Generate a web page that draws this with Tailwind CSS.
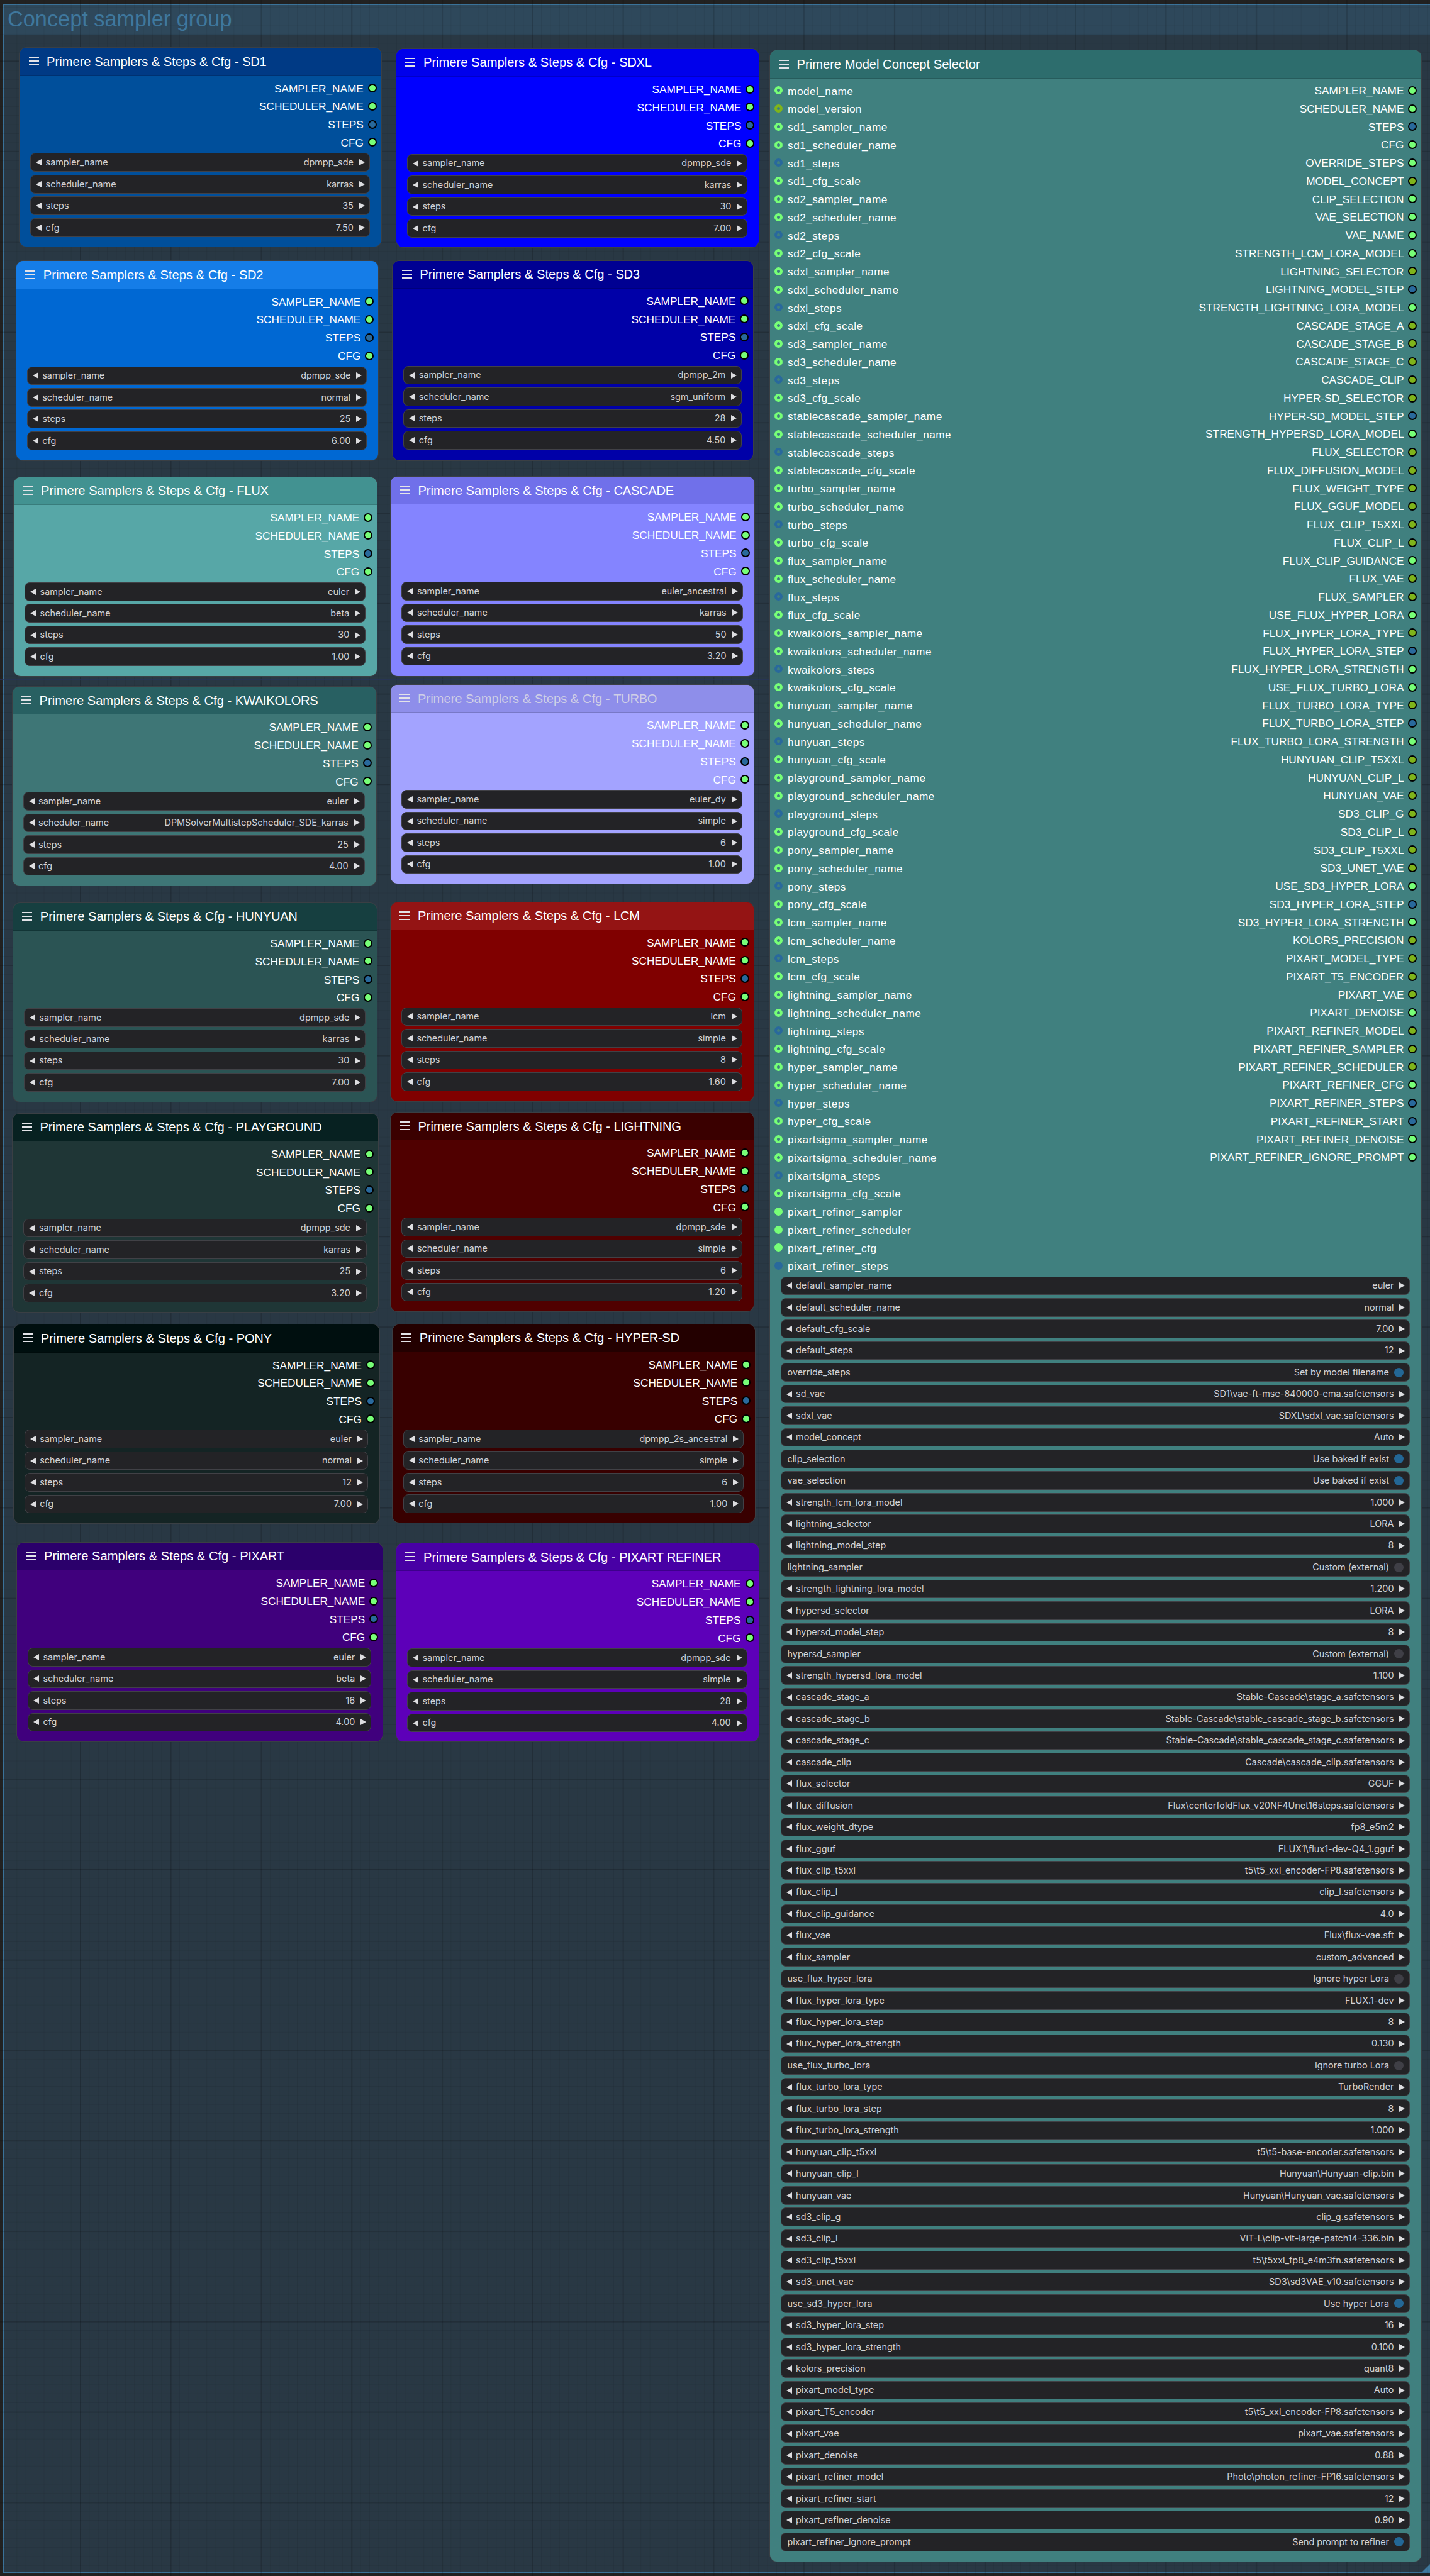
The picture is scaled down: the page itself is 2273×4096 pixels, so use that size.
<!DOCTYPE html>
<html lang="en">
<head>
<meta charset="utf-8">
<title>Concept sampler group</title>
<script src="https://cdn.jsdelivr.net/npm/@tailwindcss/browser@4"></script>
</head>
<body class="bg-[#212121]">
<main class="relative w-[2273px] h-[4096px] overflow-hidden bg-[#212121] font-['Liberation_Sans',Arial,sans-serif]">
  <section class="absolute left-[5px] top-[6px] w-[2272px] h-[4085px] bg-[#293844] border-2 border-[#3a7299]">
    <header class="h-[48px] bg-[#2e485b] pl-[5px] flex items-start text-[34.3px] leading-[44px] text-[#3f789e]">Concept sampler group</header>
    <svg class="absolute right-0 bottom-0" width="14" height="14" viewBox="0 0 14 14"><path d="M14 0V14H0Z" fill="#3f789e"/></svg>
  </section>
  <div class="absolute inset-0 bg-[linear-gradient(to_right,#00000012_1px,transparent_1px),linear-gradient(to_bottom,#00000012_1px,transparent_1px)] bg-[length:14.38px_14.38px] bg-[position:127px_97px]"></div>
  <div class="absolute inset-0 bg-[linear-gradient(to_right,#00000022_2px,transparent_2px),linear-gradient(to_bottom,#00000022_2px,transparent_2px)] bg-[length:143.8px_143.8px] bg-[position:127px_96px]"></div>
  <div class="absolute left-0 top-[1080px] w-[1222px] h-[2px] bg-[#26345a]/70"></div>
  <div id="canvas"></div>
</main>
<script>
const K = 2273 / 2780;
const DOT = { g: 'bg-[#77ff77]', b: 'bg-[#29699c]', o: 'bg-[#7fb41b]' };
const RING = { g: 'border-[#77ff77]', b: 'border-[#29699c]', o: 'border-[#7fb41b]' };

const box = 'flex items-center h-[29.6px] rounded-[8px] bg-[#232326] border-[1.5px] border-[#414146] text-[#d2d2d6]';
const arrowL = '<svg class="w-[9px] h-[10px] shrink-0" viewBox="0 0 9 10"><path d="M9 0V10L0 5Z" fill="#dddde0"/></svg>';
const arrowR = '<svg class="w-[9px] h-[10px] shrink-0" viewBox="0 0 9 10"><path d="M0 0V10L9 5Z" fill="#dddde0"/></svg>';

const widget = ([name, value, toggle]) => toggle
  ? `<div class="${box} pl-[10px] pr-[9.5px]"><span class="grow">${name}</span><span>${value}</span><i class="ml-[8px] size-[15px] rounded-full ${toggle === 'on' ? 'bg-[#236796]' : 'bg-[#3f3f46]'}"></i></div>`
  : `<div class="${box} pl-[8px] pr-[7px]">${arrowL}<span class="grow pl-[6.5px]">${name}</span><span class="pr-[9px]">${value}</span>${arrowR}</div>`;

const output = ([name, c]) =>
  `<div class="h-[28.76px] flex items-center justify-end"><span class="pt-[2px]">${name}</span><i class="ml-[7px] size-[14px] rounded-full border-2 border-black ${DOT[c]}"></i></div>`;
const input = ([name, c, open]) =>
  `<div class="h-[28.76px] flex items-center"><i class="mr-[8px] size-[13px] rounded-full ${open ? DOT[c] : 'border-4 ' + RING[c]}"></i><span class="pt-[3px] tracking-[0.45px]">${name}</span></div>`;

function node({ x, y, r, b, title, name = '', head, body, ink = 'text-white', inputs = [], outputs, widgets, gap = 'gap-[4.9px]', top = 'pt-[5.2px]' }) {
  return `<article class="absolute rounded-[11px] overflow-hidden shadow-[0_0_0_1px_#3a3f44] ${body}" style="left:${x * K}px;top:${y * K}px;width:${(r - x) * K}px;height:${(b - y) * K}px">
    <header class="h-[44.4px] pl-[14.5px] flex items-center border-b-[1.5px] border-black/15 ${head} ${ink}">
      <svg class="w-[16px] h-[14px] mr-[12.5px] -mt-px" viewBox="0 0 16 14"><path d="M0 1H16M0 7H16M0 13H16" stroke="#e3e3e8" stroke-width="1.9"/></svg>
      <h2 class="text-[20.15px] leading-none whitespace-pre">${title}<span class="tracking-[-0.3px]">${name}</span></h2>
    </header>
    <div class="flex justify-between ${top} pl-[7.5px] pr-[7px] text-[17.25px] leading-none text-white whitespace-nowrap">
      <div>${inputs.map(input).join('')}</div>
      <div>${outputs.map(output).join('')}</div>
    </div>
    <div class="flex flex-col ${gap} mt-[2.6px] ml-[17px] mr-[18px] font-[Inter,sans-serif] text-[14.4px] leading-none whitespace-nowrap">${widgets.map(widget).join('')}</div>
  </article>`;
}

const samplers = [
  [38, 93.3, 741, 480, 'SD1', 'bg-[#003a85]', 'bg-[#004f9b]', 'dpmpp_sde', 'karras', '35', '7.50'],
  [770.5, 95, 1475.5, 481, 'SDXL', 'bg-[#0000eb]', 'bg-[#0000ff]', 'dpmpp_sde', 'karras', '30', '7.00'],
  [31.5, 508, 735.5, 895.5, 'SD2', 'bg-[#157de8]', 'bg-[#0068d3]', 'dpmpp_sde', 'normal', '25', '6.00'],
  [763.5, 507, 1464.5, 895, 'SD3', 'bg-[#000092]', 'bg-[#0000a8]', 'dpmpp_2m', 'sgm_uniform', '28', '4.50'],
  [27, 928, 733, 1314.5, 'FLUX', 'bg-[#429291]', 'bg-[#57a7a7]', 'euler', 'beta', '30', '1.00'],
  [760, 927, 1466, 1314.5, 'CASCADE', 'bg-[#7070ea]', 'bg-[#8484ff]', 'euler_ancestral', 'karras', '50', '3.20'],
  [24, 1335.5, 731, 1722.5, 'KWAIKOLORS', 'bg-[#286062]', 'bg-[#3e7676]', 'euler', 'DPMSolverMultistepScheduler_SDE_karras', '25', '4.00'],
  [759.5, 1332, 1465, 1718.5, 'TURBO', 'bg-[#8e8eea]', 'bg-[#a3a3ff]', 'euler_dy', 'simple', '6', '1.00', 'text-[#cfcfe6]'],
  [25.5, 1756, 733, 2142.5, 'HUNYUAN', 'bg-[#163f40]', 'bg-[#2b5454]', 'dpmpp_sde', 'karras', '30', '7.00'],
  [759.5, 1754.5, 1465, 2141, 'LCM', 'bg-[#941414]', 'bg-[#800000]', 'lcm', 'simple', '8', '1.60'],
  [25, 2165.5, 735, 2551.5, 'PLAYGROUND', 'bg-[#072121]', 'bg-[#1f3636]', 'dpmpp_sde', 'karras', '25', '3.20'],
  [760, 2163.5, 1465, 2550, 'LIGHTNING', 'bg-[#3a0000]', 'bg-[#500000]', 'dpmpp_sde', 'simple', '6', '1.20'],
  [26.5, 2576, 737.5, 2962, 'PONY', 'bg-[#000f0f]', 'bg-[#142424]', 'euler', 'normal', '12', '7.00'],
  [763, 2575.5, 1468, 2961.5, 'HYPER-SD', 'bg-[#230000]', 'bg-[#380000]', 'dpmpp_2s_ancestral', 'simple', '6', '1.00'],
  [33, 3000, 744, 3386.5, 'PIXART', 'bg-[#2b006b]', 'bg-[#40007d]', 'euler', 'beta', '16', '4.00'],
  [770.5, 3001.5, 1474.5, 3387, 'PIXART REFINER', 'bg-[#4800a5]', 'bg-[#5d00b9]', 'dpmpp_sde', 'simple', '28', '4.00'],
].map(([x, y, r, b, name, head, body, s, sc, st, cfg, ink]) => ({
  x, y, r, b, head, body, ink, name, title: 'Primere Samplers &amp; Steps &amp; Cfg - ',
  outputs: [['SAMPLER_NAME', 'g'], ['SCHEDULER_NAME', 'g'], ['STEPS', 'b'], ['CFG', 'g']],
  widgets: [['sampler_name', s], ['scheduler_name', sc], ['steps', st], ['cfg', cfg]],
}));

const inputs = [['model_name', 'g'], ['model_version', 'o']];
for (const m of 'sd1 sd2 sdxl sd3 stablecascade turbo flux kwaikolors hunyuan playground pony lcm lightning hyper pixartsigma'.split(' '))
  inputs.push([m + '_sampler_name', 'g'], [m + '_scheduler_name', 'g'], [m + '_steps', 'b'], [m + '_cfg_scale', 'g']);
inputs.push(['pixart_refiner_sampler', 'g', 1], ['pixart_refiner_scheduler', 'g', 1], ['pixart_refiner_cfg', 'g', 1], ['pixart_refiner_steps', 'b', 1]);

const outputs = `SAMPLER_NAME g|SCHEDULER_NAME g|STEPS b|CFG g|OVERRIDE_STEPS g|MODEL_CONCEPT o|CLIP_SELECTION g|VAE_SELECTION g|VAE_NAME g|STRENGTH_LCM_LORA_MODEL g|LIGHTNING_SELECTOR o|LIGHTNING_MODEL_STEP b|STRENGTH_LIGHTNING_LORA_MODEL g|CASCADE_STAGE_A o|CASCADE_STAGE_B o|CASCADE_STAGE_C o|CASCADE_CLIP o|HYPER-SD_SELECTOR o|HYPER-SD_MODEL_STEP b|STRENGTH_HYPERSD_LORA_MODEL g|FLUX_SELECTOR o|FLUX_DIFFUSION_MODEL o|FLUX_WEIGHT_TYPE o|FLUX_GGUF_MODEL o|FLUX_CLIP_T5XXL o|FLUX_CLIP_L o|FLUX_CLIP_GUIDANCE g|FLUX_VAE o|FLUX_SAMPLER o|USE_FLUX_HYPER_LORA g|FLUX_HYPER_LORA_TYPE o|FLUX_HYPER_LORA_STEP b|FLUX_HYPER_LORA_STRENGTH g|USE_FLUX_TURBO_LORA g|FLUX_TURBO_LORA_TYPE o|FLUX_TURBO_LORA_STEP b|FLUX_TURBO_LORA_STRENGTH g|HUNYUAN_CLIP_T5XXL o|HUNYUAN_CLIP_L o|HUNYUAN_VAE o|SD3_CLIP_G o|SD3_CLIP_L o|SD3_CLIP_T5XXL o|SD3_UNET_VAE o|USE_SD3_HYPER_LORA g|SD3_HYPER_LORA_STEP b|SD3_HYPER_LORA_STRENGTH g|KOLORS_PRECISION o|PIXART_MODEL_TYPE o|PIXART_T5_ENCODER o|PIXART_VAE o|PIXART_DENOISE g|PIXART_REFINER_MODEL o|PIXART_REFINER_SAMPLER o|PIXART_REFINER_SCHEDULER o|PIXART_REFINER_CFG g|PIXART_REFINER_STEPS b|PIXART_REFINER_START b|PIXART_REFINER_DENOISE g|PIXART_REFINER_IGNORE_PROMPT g`.split('|').map(s => s.split(' '));

const widgets = String.raw`default_sampler_name|euler
default_scheduler_name|normal
default_cfg_scale|7.00
default_steps|12
override_steps|Set by model filename|on
sd_vae|SD1\vae-ft-mse-840000-ema.safetensors
sdxl_vae|SDXL\sdxl_vae.safetensors
model_concept|Auto
clip_selection|Use baked if exist|on
vae_selection|Use baked if exist|on
strength_lcm_lora_model|1.000
lightning_selector|LORA
lightning_model_step|8
lightning_sampler|Custom (external)|off
strength_lightning_lora_model|1.200
hypersd_selector|LORA
hypersd_model_step|8
hypersd_sampler|Custom (external)|off
strength_hypersd_lora_model|1.100
cascade_stage_a|Stable-Cascade\stage_a.safetensors
cascade_stage_b|Stable-Cascade\stable_cascade_stage_b.safetensors
cascade_stage_c|Stable-Cascade\stable_cascade_stage_c.safetensors
cascade_clip|Cascade\cascade_clip.safetensors
flux_selector|GGUF
flux_diffusion|Flux\centerfoldFlux_v20NF4Unet16steps.safetensors
flux_weight_dtype|fp8_e5m2
flux_gguf|FLUX1\flux1-dev-Q4_1.gguf
flux_clip_t5xxl|t5\t5_xxl_encoder-FP8.safetensors
flux_clip_l|clip_l.safetensors
flux_clip_guidance|4.0
flux_vae|Flux\flux-vae.sft
flux_sampler|custom_advanced
use_flux_hyper_lora|Ignore hyper Lora|off
flux_hyper_lora_type|FLUX.1-dev
flux_hyper_lora_step|8
flux_hyper_lora_strength|0.130
use_flux_turbo_lora|Ignore turbo Lora|off
flux_turbo_lora_type|TurboRender
flux_turbo_lora_step|8
flux_turbo_lora_strength|1.000
hunyuan_clip_t5xxl|t5\t5-base-encoder.safetensors
hunyuan_clip_l|Hunyuan\Hunyuan-clip.bin
hunyuan_vae|Hunyuan\Hunyuan_vae.safetensors
sd3_clip_g|clip_g.safetensors
sd3_clip_l|ViT-L\clip-vit-large-patch14-336.bin
sd3_clip_t5xxl|t5\t5xxl_fp8_e4m3fn.safetensors
sd3_unet_vae|SD3\sd3VAE_v10.safetensors
use_sd3_hyper_lora|Use hyper Lora|on
sd3_hyper_lora_step|16
sd3_hyper_lora_strength|0.100
kolors_precision|quant8
pixart_model_type|Auto
pixart_T5_encoder|t5\t5_xxl_encoder-FP8.safetensors
pixart_vae|pixart_vae.safetensors
pixart_denoise|0.88
pixart_refiner_model|Photo\photon_refiner-FP16.safetensors
pixart_refiner_start|12
pixart_refiner_denoise|0.90
pixart_refiner_ignore_prompt|Send prompt to refiner|on`.split('\n').map(l => l.split('|'));

const selector = {
  x: 1496.5, y: 98.3, r: 2763.5, b: 4982, title: 'Primere Model Concept Selector',
  head: 'bg-[#2d6d6d]', body: 'bg-[#40807f]', inputs, outputs, widgets, gap: 'gap-[4.85px]', top: 'pt-[4.7px]',
};

document.getElementById('canvas').innerHTML = [...samplers, selector].map(node).join('');
</script>
</body>
</html>
